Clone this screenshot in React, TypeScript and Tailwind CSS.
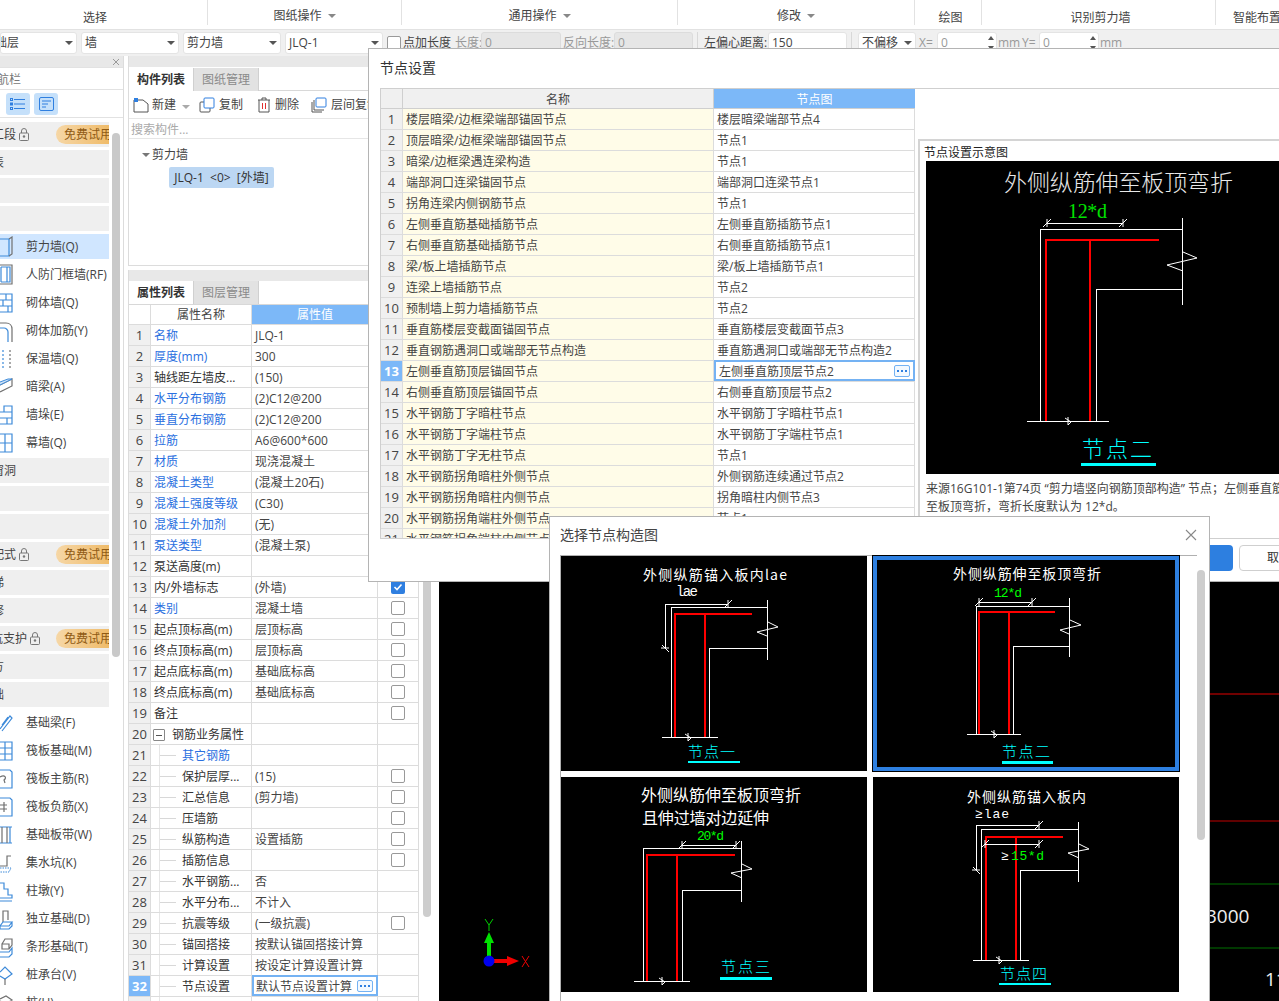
import { ReactNode } from "react";

const sans = "'Open Sans','Noto Sans CJK SC',sans-serif";
const cjk = "'Noto Sans CJK SC',sans-serif";
const mono = "'Liberation Mono',monospace";
const serif = "'Liberation Serif',serif";

const nodeRows = [
  ["楼层暗梁/边框梁端部锚固节点", "楼层暗梁端部节点4"],
  ["顶层暗梁/边框梁端部锚固节点", "节点1"],
  ["暗梁/边框梁遇连梁构造", "节点1"],
  ["端部洞口连梁锚固节点", "端部洞口连梁节点1"],
  ["拐角连梁内侧钢筋节点", "节点1"],
  ["左侧垂直筋基础插筋节点", "左侧垂直筋插筋节点1"],
  ["右侧垂直筋基础插筋节点", "右侧垂直筋插筋节点1"],
  ["梁/板上墙插筋节点", "梁/板上墙插筋节点1"],
  ["连梁上墙插筋节点", "节点2"],
  ["预制墙上剪力墙插筋节点", "节点2"],
  ["垂直筋楼层变截面锚固节点", "垂直筋楼层变截面节点3"],
  ["垂直钢筋遇洞口或端部无节点构造", "垂直筋遇洞口或端部无节点构造2"],
  ["左侧垂直筋顶层锚固节点", "左侧垂直筋顶层节点2"],
  ["右侧垂直筋顶层锚固节点", "右侧垂直筋顶层节点2"],
  ["水平钢筋丁字暗柱节点", "水平钢筋丁字暗柱节点1"],
  ["水平钢筋丁字端柱节点", "水平钢筋丁字端柱节点1"],
  ["水平钢筋丁字无柱节点", "节点1"],
  ["水平钢筋拐角暗柱外侧节点", "外侧钢筋连续通过节点2"],
  ["水平钢筋拐角暗柱内侧节点", "拐角暗柱内侧节点3"],
  ["水平钢筋拐角端柱外侧节点", "节点1"],
  ["水平钢筋拐角端柱内侧节点", "节点1"],
];

// check: 0 none, 1 empty box, 2 ticked
const propRows = [
  { n: "名称", v: "JLQ-1", blue: true, check: 0 },
  { n: "厚度(mm)", v: "300", blue: true, check: 0 },
  { n: "轴线距左墙皮...", v: "(150)", blue: false, check: 0 },
  { n: "水平分布钢筋", v: "(2)C12@200", blue: true, check: 0 },
  { n: "垂直分布钢筋", v: "(2)C12@200", blue: true, check: 0 },
  { n: "拉筋", v: "A6@600*600", blue: true, check: 0 },
  { n: "材质", v: "现浇混凝土", blue: true, check: 0 },
  { n: "混凝土类型", v: "(混凝土20石)", blue: true, check: 0 },
  { n: "混凝土强度等级", v: "(C30)", blue: true, check: 0 },
  { n: "混凝土外加剂", v: "(无)", blue: true, check: 0 },
  { n: "泵送类型", v: "(混凝土泵)", blue: true, check: 0 },
  { n: "泵送高度(m)", v: "", blue: false, check: 0 },
  { n: "内/外墙标志", v: "(外墙)", blue: false, check: 2 },
  { n: "类别", v: "混凝土墙", blue: true, check: 1 },
  { n: "起点顶标高(m)", v: "层顶标高", blue: false, check: 1 },
  { n: "终点顶标高(m)", v: "层顶标高", blue: false, check: 1 },
  { n: "起点底标高(m)", v: "基础底标高", blue: false, check: 1 },
  { n: "终点底标高(m)", v: "基础底标高", blue: false, check: 1 },
  { n: "备注", v: "", blue: false, check: 1 },
];

const subRows = [
  { n: "其它钢筋", v: "", blue: true, check: 0 },
  { n: "保护层厚...", v: "(15)", blue: false, check: 1 },
  { n: "汇总信息", v: "(剪力墙)", blue: false, check: 1 },
  { n: "压墙筋", v: "", blue: false, check: 1 },
  { n: "纵筋构造", v: "设置插筋", blue: false, check: 1 },
  { n: "插筋信息", v: "", blue: false, check: 1 },
  { n: "水平钢筋...", v: "否", blue: false, check: 0 },
  { n: "水平分布...", v: "不计入", blue: false, check: 0 },
  { n: "抗震等级", v: "(一级抗震)", blue: false, check: 1 },
  { n: "锚固搭接", v: "按默认锚固搭接计算", blue: false, check: 0 },
  { n: "计算设置", v: "按设定计算设置计算", blue: false, check: 0 },
];

const blueLine = { fill: "none", stroke: "#3d8ad9", strokeWidth: 1.2 };
const grayLine = { fill: "none", stroke: "#707070", strokeWidth: 1.2 };

const navIcons: Record<string, ReactNode> = {
  shear: <><path d="M0 3H9V20H0" {...blueLine} /><path d="M9 3L12 1V18L9 20" {...grayLine} /></>,
  door: <><path d="M0 1H12V20H0" {...grayLine} /><path d="M1 3V18M7 3V18M1 3H10V18H1" {...blueLine} /></>,
  brick: <path d="M0 2H12V20H0M0 8H12M0 14H12M6 2V8M3 8V14M8 14V20" {...blueLine} />,
  rebar: <><path d="M0 3H6C10 3 12 6 12 9V22" {...grayLine} /><path d="M0 8H4C6 8 8 10 8 12V22" {...blueLine} /></>,
  insul: <><path d="M3 2V20" fill="none" stroke="#3d8ad9" strokeWidth="1.2" strokeDasharray="2 2" /><path d="M10 2V20" fill="none" stroke="#707070" strokeWidth="1.2" strokeDasharray="2 2" /></>,
  beam: <><path d="M0 9L12 3V10L0 16" {...grayLine} /><path d="M0 6L8 3H12L0 9" fill="#cfe3f8" stroke="#3d8ad9" /></>,
  pier: <path d="M0 8H4V2H12V20H0M0 14H12M4 8H12M7 14V20" {...blueLine} />,
  curtain: <path d="M0 2H12V20H0M0 11H12M5 2V20" {...blueLine} />,
  ground: <path d="M0 17L10 4L12 6L2 19M2 13L8 5" {...blueLine} />,
  raft: <path d="M0 2H12V20H0M0 8H12M0 14H12M5 2V20" {...blueLine} />,
  raftMain: <><path d="M0 2H10L12 4V20H0" {...blueLine} /><path d="M0 9C5 6 7 10 4 12L5 15" {...grayLine} /></>,
  raftNeg: <><path d="M0 2H10L12 4V20H0" {...blueLine} /><path d="M0 9H7M0 13H7M4 6V16" {...grayLine} /></>,
  strip: <><path d="M0 3H12M0 19H12" {...blueLine} /><path d="M2 3V19M7 3V19" {...grayLine} /><path d="M10 3V19" {...blueLine} /></>,
  pit: <><path d="M0 14H7V4H11" {...grayLine} /><path d="M0 16H11L9 20H0" fill="none" stroke="#3d8ad9" strokeDasharray="1.5 1" /></>,
  column: <path d="M0 18H12V15H8V9H4V3H0M0 21H12" {...blueLine} />,
  footing: <><path d="M3 14V3H8V12" {...grayLine} /><path d="M0 18H9L12 14H3L0 18V21H9L12 18V14" {...blueLine} /></>,
  strip2: <><path d="M2 8L5 3H12V9L9 13H2V8H9V13" {...grayLine} /><path d="M0 16H9L12 12V18L9 21H0" {...blueLine} /></>,
  cap: <><path d="M0 8L5 3L12 10L5 15L0 12" {...blueLine} /><path d="M5 15V21" {...grayLine} /></>,
  pile: <path d="M0 7L6 4L12 8L6 12L0 9" {...grayLine} />,
};

function Lock() {
  return (
    <svg width="10" height="13" viewBox="0 0 10 13" className="shrink-0">
      <path d="M2.5 5V3a2.5 2.5 0 0 1 5 0v2" fill="none" stroke="#777" />
      <rect x="0.5" y="5" width="9" height="7.5" rx="1" fill="none" stroke="#777" />
      <circle cx="5" cy="8.5" r="1.2" fill="#777" />
    </svg>
  );
}

function GrayRow({ text, shift, lock, pill }: { text?: string; shift?: string; lock?: boolean; pill?: boolean }) {
  return (
    <div className="relative h-[25px] flex items-center bg-[#efefef] overflow-hidden text-[#444] shrink-0">
      {text && <span className={`${shift} whitespace-nowrap`}>{text}</span>}
      {lock && <span className="ml-[3px]"><Lock /></span>}
      {pill && (
        <span className="absolute left-[56px] top-[3px] w-[53px] h-[19px] rounded-l-full bg-gradient-to-r from-[#f6d7a6] to-[#efbb69] text-[#8f5a14] flex items-center pl-[8px] whitespace-nowrap">
          免费试用
        </span>
      )}
    </div>
  );
}

function NavItem({ icon, text, active }: { icon: string; text: string; active?: boolean }) {
  return (
    <div className={`h-[25px] flex items-center shrink-0 text-[#444] whitespace-nowrap ${active ? "bg-[#d0e6ff]" : ""}`}>
      <svg width="14" height="22" viewBox="0 0 14 22" className="shrink-0 mr-[12px]">{navIcons[icon]}</svg>
      {text}
    </div>
  );
}

function Caret({ color = "#666" }: { color?: string }) {
  return <span className="inline-block w-0 h-0 border-l-[4px] border-r-[4px] border-t-[4px] border-l-transparent border-r-transparent" style={{ borderTopColor: color }} />;
}

function Sel({ w, children, shift }: { w: string; children: ReactNode; shift?: string }) {
  return (
    <div className={`${w} h-[22px] shrink-0 bg-white border border-[#e4e4e4] rounded-[3px] flex items-center justify-between pl-[3px] pr-[3px] overflow-hidden`}>
      <span className={`${shift ?? ""} whitespace-nowrap`}>{children}</span>
      <Caret color="#555" />
    </div>
  );
}

function Spin({ w }: { w: string }) {
  return (
    <div className={`${w} h-[22px] shrink-0 bg-white border border-[#e4e4e4] rounded-[3px] flex items-center justify-between pl-[3px] pr-[2px] text-[#999]`}>
      0
      <span className="flex flex-col gap-[6px]">
        <span className="w-0 h-0 border-l-[3px] border-r-[3px] border-b-[4px] border-l-transparent border-r-transparent border-b-[#555]" />
        <span className="w-0 h-0 border-l-[3px] border-r-[3px] border-t-[4px] border-l-transparent border-r-transparent border-t-[#555]" />
      </span>
    </div>
  );
}

function Dots() {
  return (
    <span className="w-[16px] h-[12px] shrink-0 border border-[#74b2f3] rounded-[2px] bg-[#f3f9ff] flex items-center justify-center gap-[2px]">
      <i className="w-[2px] h-[2px] bg-[#2f7fe0]" />
      <i className="w-[2px] h-[2px] bg-[#2f7fe0]" />
      <i className="w-[2px] h-[2px] bg-[#2f7fe0]" />
    </span>
  );
}

function Check({ on }: { on?: boolean }) {
  if (on) {
    return (
      <span className="w-[14px] h-[14px] rounded-[2px] bg-[#2f7fe0] flex items-center justify-center">
        <svg width="10" height="10" viewBox="0 0 10 10"><path d="M1.5 5L4 7.5L8.5 2.5" fill="none" stroke="#fff" strokeWidth="1.6" /></svg>
      </span>
    );
  }
  return <span className="w-[14px] h-[14px] rounded-[2px] border border-[#999] bg-white" />;
}

function Tab({ label, active }: { label: string; active?: boolean }) {
  return (
    <div className={`h-[23px] w-[65px] flex items-center justify-center border-r border-[#d0d0d0] ${active ? "bg-white font-bold text-[#333]" : "bg-[#e2e2e2] text-[#8a8a8a]"}`}>
      {label}
    </div>
  );
}

function PropRow({ i, name, value, blue, check, sub, active }: { i: number; name: ReactNode; value: string; blue?: boolean; check: number; sub?: boolean; active?: boolean }) {
  return (
    <div className="h-[21px] flex border-b border-[#dcdcdc] shrink-0">
      <div className={`w-[22px] shrink-0 flex items-center justify-center pt-[2px] border-r border-[#dcdcdc] text-[13px] ${active ? "bg-[#7cb8f8] text-white font-bold" : "bg-[#f0f0f0] text-[#444]"}`}>{i}</div>
      <div className={`w-[101px] shrink-0 flex items-center border-r border-[#dcdcdc] whitespace-nowrap ${blue ? "text-[#2a6fe0]" : "text-[#333]"}`}>
        {sub && <span className="w-[9px] h-full border-r border-[#e6e6e6] shrink-0" />}
        {sub && <span className="w-[16px] h-px bg-[#d8d8d8] shrink-0 mr-[6px]" />}
        {!sub && <span className="pl-[3px]" />}
        <span className="flex items-center pt-[2px]">{name}</span>
      </div>
      {active ? (
        <div className="w-[126px] shrink-0 flex items-center justify-between border-2 border-[#74b2f3] -mt-px pl-[2px] pr-[3px] text-[#444] whitespace-nowrap">
          <span className="pt-[2px]">{value}</span>
          <Dots />
        </div>
      ) : (
        <div className="w-[126px] shrink-0 flex items-center border-r border-[#dcdcdc] pl-[3px] pt-[2px] text-[#444] whitespace-nowrap">{value}</div>
      )}
      <div className="flex-1 flex items-center justify-center border-r border-[#dcdcdc]">{check > 0 && <Check on={check === 2} />}</div>
    </div>
  );
}

type Geo = { l: number; r: number; t: number; ih: number; iv: number; b: number; bl: number; br: number; rt: number; rb: number; r1: number; r2: number; ry: number; re: number; bx: number; zig: string };

function Wall({ g }: { g: Geo }) {
  return (
    <g>
      <g stroke="#fff" strokeWidth="1" fill="none" shapeRendering="crispEdges">
        <path d={`M${g.l} ${g.b}V${g.t}H${g.r}`} />
        <path d={`M${g.r} ${g.rt}V${g.rb}`} />
        <path d={`M${g.iv} ${g.b}V${g.ih}H${g.r}`} />
        <path d={`M${g.bl} ${g.b}H${g.br}`} />
      </g>
      <polyline points={g.zig} fill="none" stroke="#fff" strokeWidth="1" />
      <path d={`M${g.bx - 3} ${g.b - 3}L${g.bx + 3} ${g.b + 1}L${g.bx} ${g.b + 4}V${g.b - 4}`} fill="none" stroke="#fff" strokeWidth="1" />
      <g stroke="#ff0000" strokeWidth="2" fill="none" shapeRendering="crispEdges">
        <path d={`M${g.r1} ${g.b}V${g.ry}H${g.re}`} />
        <path d={`M${g.r2} ${g.b}V${g.ry}`} />
      </g>
    </g>
  );
}

function Dim({ x1, x2, y, down }: { x1: number; x2: number; y: number; down?: number }) {
  return (
    <g stroke="#fff" strokeWidth="1" fill="none">
      {down ? <path d={`M${x2} ${y}H${x1}V${down}`} shapeRendering="crispEdges" /> : <path d={`M${x1} ${y}H${x2}`} shapeRendering="crispEdges" />}
      <path d={`M${x2} ${y - 4}V${y + 4}M${x2 - 4} ${y + 4}L${x2 + 4} ${y - 4}`} />
      {down ? (
        <path d={`M${x1 - 4} ${down}H${x1 + 4}M${x1 - 3} ${down - 3}L${x1 + 4} ${down + 4}`} />
      ) : (
        <path d={`M${x1} ${y - 4}V${y + 4}M${x1 - 4} ${y + 4}L${x1 + 4} ${y - 4}`} />
      )}
    </g>
  );
}

// family === cjk sits a bit low with central baseline, so nudge it up
function T({ x, y, w, size, fill = "#fff", family = cjk, weight, children }: { x: number; y: number; w: number; size: number; fill?: string; family?: string; weight?: number; children: string }) {
  return (
    <text x={x} y={family === cjk ? y - size * 0.1 : y} textLength={w} lengthAdjust="spacing" fontSize={size} fill={fill} fontFamily={family} fontWeight={weight} dominantBaseline="central">
      {children}
    </text>
  );
}

function Label({ x, y, w, size, ux, uw, uy, uh, children }: { x: number; y: number; w: number; size: number; ux: number; uw: number; uy: number; uh: number; children: string }) {
  return (
    <g>
      <T x={x} y={y} w={w} size={size} fill="#00ffff" weight={300}>{children}</T>
      <rect x={ux} y={uy} width={uw} height={uh} fill="#00ffff" />
    </g>
  );
}

function Card({ x, y, selected, children }: { x: number; y: number; selected?: boolean; children: ReactNode }) {
  return (
    <div className={`h-[215px] bg-black ${selected ? "border-[4px] border-[#2d7fe0] outline outline-1 outline-black" : ""}`}>
      <svg width="306" height="215" viewBox={`${x} ${y} 306 215`} className={`block ${selected ? "-mt-[4px] -ml-[4px]" : ""}`}>
        {children}
      </svg>
    </div>
  );
}

export default function App() {
  return (
    <div className="relative w-[1279px] h-[1001px] overflow-hidden bg-white text-[12px] text-[#444] font-['Open_Sans','Noto_Sans_CJK_SC',sans-serif]">
      {/* ribbon labels */}
      <div className="h-[30px] flex border-b border-[#e2e2e2] bg-white overflow-hidden">
        <div className="w-[208px] h-[25px] shrink-0 flex items-center justify-center pt-[11px] border-r border-[#e2e2e2]"><span className="mr-[17px]">选择</span></div>
        <div className="w-[194px] h-[25px] shrink-0 flex items-center justify-center gap-[6px] pt-[6px] border-r border-[#e2e2e2]">图纸操作 <Caret color="#888" /></div>
        <div className="w-[276px] h-[25px] shrink-0 flex items-center justify-center gap-[6px] pt-[6px] border-r border-[#e2e2e2]">通用操作 <Caret color="#888" /></div>
        <div className="w-[237px] h-[25px] shrink-0 flex items-center justify-center gap-[6px] pt-[6px] border-r border-[#e2e2e2]">修改 <Caret color="#888" /></div>
        <div className="w-[67px] h-[25px] shrink-0 flex items-center justify-center pt-[11px] pl-[5px] border-r border-[#e2e2e2]">绘图</div>
        <div className="w-[234px] h-[25px] shrink-0 flex items-center justify-center pt-[11px] pl-[4px] border-r border-[#e2e2e2]">识别剪力墙</div>
        <div className="h-[25px] shrink-0 flex items-center pl-[17px] pt-[11px] whitespace-nowrap">智能布置</div>
      </div>

      {/* option bar */}
      <div className="h-[26px] flex items-center bg-[#f0f0f0] overflow-hidden whitespace-nowrap">
        <Sel w="w-[77px]" shift="-ml-[21px]">基础层</Sel>
        <span className="w-[4px] shrink-0" />
        <Sel w="w-[98px]">墙</Sel>
        <span className="w-[4px] shrink-0" />
        <Sel w="w-[98px]">剪力墙</Sel>
        <span className="w-[4px] shrink-0" />
        <Sel w="w-[98px]">JLQ-1</Sel>
        <span className="w-[4px] shrink-0" />
        <span className="w-[14px] h-[14px] shrink-0 border border-[#999] rounded-[2px] bg-white" />
        <span className="w-[50px] pl-[2px] shrink-0">点加长度</span>
        <span className="w-[30px] pl-[4px] shrink-0 text-[#999]">长度:</span>
        <span className="w-[80px] h-[22px] shrink-0 bg-[#e6e6e6] border border-[#dcdcdc] rounded-[3px] pl-[3px] text-[#999] flex items-center">0</span>
        <span className="w-[53px] pl-[2px] shrink-0 text-[#999]">反向长度:</span>
        <span className="w-[79px] h-[22px] shrink-0 bg-[#e6e6e6] border border-[#dcdcdc] rounded-[3px] pl-[3px] text-[#999] flex items-center">0</span>
        <span className="ml-[4px] w-px h-[22px] bg-[#d8d8d8] shrink-0" />
        <span className="w-[70px] pl-[6px] shrink-0">左偏心距离:</span>
        <span className="w-[79px] h-[22px] shrink-0 bg-white border border-[#e4e4e4] rounded-[3px] pl-[3px] flex items-center">150</span>
        <span className="ml-[4px] w-px h-[22px] bg-[#d8d8d8] shrink-0" />
        <span className="w-[6px] shrink-0" />
        <Sel w="w-[58px]">不偏移</Sel>
        <span className="w-[21px] pl-[3px] shrink-0 text-[#999]">X=</span>
        <Spin w="w-[60px]" />
        <span className="w-[25px] pl-[1px] shrink-0 text-[#999]">mm</span>
        <span className="w-[17px] shrink-0 text-[#999]">Y=</span>
        <Spin w="w-[60px]" />
        <span className="pl-[1px] shrink-0 text-[#999]">mm</span>
      </div>

      <div className="flex h-[945px]">
        {/* navigation */}
        <div className="w-[124px] shrink-0 border-r border-[#dcdcdc] flex flex-col overflow-hidden">
          <div className="h-[11px] bg-[#e8e8e8] flex items-center justify-end pr-[3px] shrink-0">
            <svg width="8" height="8" viewBox="0 0 8 8"><path d="M1 1L7 7M7 1L1 7" stroke="#999" /></svg>
          </div>
          <div className="h-[23px] border-t border-b border-[#e2e2e2] flex items-center pt-[2px] shrink-0 text-[#777]"><span className="-ml-[15px] whitespace-nowrap">导航栏</span></div>
          <div className="h-[28px] border-b border-[#e2e2e2] flex items-center gap-[4px] pl-[6px] shrink-0">
            <span className="w-[24px] h-[22px] rounded-[3px] bg-[#c5e0fa] flex items-center justify-center">
              <svg width="16" height="12" viewBox="0 0 16 12"><path d="M4 1.5H15M4 6H15M4 10.5H15" stroke="#2f7fe0" /><rect x="0.5" y="0.5" width="2" height="2" fill="none" stroke="#2f7fe0" /><rect x="0.5" y="5" width="2" height="2" fill="none" stroke="#2f7fe0" /><rect x="0.5" y="9.5" width="2" height="2" fill="none" stroke="#2f7fe0" /></svg>
            </span>
            <span className="w-[24px] h-[22px] rounded-[3px] bg-[#c5e0fa] flex items-center justify-center">
              <svg width="15" height="14" viewBox="0 0 15 14"><rect x="0.5" y="0.5" width="14" height="13" rx="1.5" fill="none" stroke="#2f7fe0" /><path d="M3 4H12M3 7H9M3 10H7" stroke="#2f7fe0" /></svg>
            </span>
          </div>
          <div className="flex pt-[4px] flex-1 overflow-hidden">
            <div className="w-[109px] shrink-0 flex flex-col gap-[3px]">
              <GrayRow text="施工段" shift="-ml-[20px]" lock pill />
              <GrayRow text="报表" shift="-ml-[20px]" />
              <GrayRow />
              <GrayRow />
              <NavItem icon="shear" text="剪力墙(Q)" active />
              <NavItem icon="door" text="人防门框墙(RF)" />
              <NavItem icon="brick" text="砌体墙(Q)" />
              <NavItem icon="rebar" text="砌体加筋(Y)" />
              <NavItem icon="insul" text="保温墙(Q)" />
              <NavItem icon="beam" text="暗梁(A)" />
              <NavItem icon="pier" text="墙垛(E)" />
              <NavItem icon="curtain" text="幕墙(Q)" />
              <GrayRow text="门窗洞" shift="-ml-[20px]" />
              <GrayRow />
              <GrayRow />
              <GrayRow text="装配式" shift="-ml-[20px]" lock pill />
              <GrayRow text="楼梯" shift="-ml-[20px]" />
              <GrayRow text="装修" shift="-ml-[20px]" />
              <GrayRow text="基坑支护" shift="-ml-[21px]" lock pill />
              <GrayRow text="土方" shift="-ml-[20px]" />
              <GrayRow text="基础" shift="-ml-[20px]" />
              <NavItem icon="ground" text="基础梁(F)" />
              <NavItem icon="raft" text="筏板基础(M)" />
              <NavItem icon="raftMain" text="筏板主筋(R)" />
              <NavItem icon="raftNeg" text="筏板负筋(X)" />
              <NavItem icon="strip" text="基础板带(W)" />
              <NavItem icon="pit" text="集水坑(K)" />
              <NavItem icon="column" text="柱墩(Y)" />
              <NavItem icon="footing" text="独立基础(D)" />
              <NavItem icon="strip2" text="条形基础(T)" />
              <NavItem icon="cap" text="桩承台(V)" />
              <NavItem icon="pile" text="桩(U)" />
            </div>
            <div className="ml-[3px] mt-[11px] w-[8px] h-[524px] rounded-full bg-[#c9c9c9]" />
          </div>
        </div>

        {/* component + property panels */}
        <div className="w-[303px] ml-[4px] shrink-0 flex flex-col">
          <div className="h-[210px] shrink-0 border border-t-0 border-[#dcdcdc] flex flex-col">
            <div className="h-[11px] bg-[#e8e8e8] shrink-0" />
            <div className="h-[24px] pt-px flex border-b border-[#d8d8d8] shrink-0">
              <Tab label="构件列表" active />
              <Tab label="图纸管理" />
            </div>
            <div className="h-[28px] flex items-center shrink-0 whitespace-nowrap border-b border-[#e6e6e6]">
              <svg width="16" height="16" viewBox="0 0 16 16" className="ml-[4px] mr-[3px]"><path d="M1 15V3H10L15 7V15Z" fill="none" stroke="#555" /><rect x="1" y="1" width="4" height="4" fill="#2f7fe0" /></svg>
              新建
              <span className="ml-[6px] mr-[9px]"><Caret color="#aaa" /></span>
              <svg width="16" height="16" viewBox="0 0 16 16" className="mr-[4px]"><rect x="1" y="5" width="10" height="10" rx="1" fill="none" stroke="#555" /><rect x="5" y="1" width="10" height="10" rx="1" fill="#fff" stroke="#2f7fe0" /></svg>
              复制
              <svg width="14" height="16" viewBox="0 0 14 16" className="ml-[14px] mr-[4px]"><path d="M1 3H13M5 3V1H9V3M2 3V15H12V3" fill="none" stroke="#555" /><path d="M5.5 6V12M8.5 6V12" stroke="#e03030" /></svg>
              删除
              <svg width="16" height="16" viewBox="0 0 16 16" className="ml-[12px] mr-[4px]"><path d="M1 5V15H11M3 3V13H13" fill="none" stroke="#555" /><rect x="5" y="1" width="10" height="9" rx="1" fill="#fff" stroke="#2f7fe0" /></svg>
              层间复制
            </div>
            <div className="h-[20px] flex items-center pl-[2px] pt-[2px] text-[#aaa] border-b border-[#e6e6e6] shrink-0">搜索构件...</div>
            <div className="flex items-center h-[28px] pl-[13px] pt-[3px] gap-[2px] shrink-0">
              <Caret color="#777" />
              <span>剪力墙</span>
            </div>
            <div className="ml-[40px] w-[105px] h-[21px] rounded-[2px] bg-[#bcd7f3] flex items-center justify-center whitespace-nowrap text-[#333]">JLQ-1&nbsp;&nbsp;&lt;0&gt;&nbsp;&nbsp;[外墙]</div>
          </div>

          <div className="mt-[4px] flex flex-1 overflow-hidden">
            <div className="w-[291px] shrink-0 flex flex-col border-l border-[#dcdcdc]">
              <div className="h-[11px] bg-[#e8e8e8] shrink-0" />
              <div className="h-[24px] flex border-b border-[#d8d8d8] shrink-0">
                <Tab label="属性列表" active />
                <Tab label="图层管理" />
              </div>
              <div className="h-[20px] flex border-b border-[#dcdcdc] shrink-0">
                <div className="w-[22px] border-r border-[#dcdcdc]" />
                <div className="w-[101px] flex items-center justify-center border-r border-[#dcdcdc]">属性名称</div>
                <div className="w-[126px] flex items-center justify-center bg-[#7cb8f8] text-white">属性值</div>
              </div>
              {propRows.map((r, i) => (
                <PropRow key={i} i={i + 1} name={r.n} value={r.v} blue={r.blue} check={r.check} />
              ))}
              <PropRow
                i={20}
                name={
                  <>
                    <span className="-ml-px w-[12px] h-[12px] shrink-0 border border-[#888] rounded-[1px] flex items-center justify-center mr-[7px]"><i className="w-[6px] h-px bg-[#555]" /></span>
                    钢筋业务属性
                  </>
                }
                value=""
                check={0}
              />
              {subRows.map((r, i) => (
                <PropRow key={i} i={i + 21} name={r.n} value={r.v} blue={r.blue} check={r.check} sub />
              ))}
              <PropRow i={32} name="节点设置" value="默认节点设置计算" check={0} sub active />
              <PropRow i={33} name="" value="" check={0} sub />
            </div>
            <div className="ml-[4px] mt-[35px] w-[8px] h-[612px] rounded-b-full bg-[#cdcdcd]" />
          </div>
        </div>

        {/* drawing canvas */}
        <div className="ml-[8px] flex-1 bg-black overflow-hidden">
          <svg width="840" height="945" viewBox="439 56 840 945" className="block">
            <path d="M1209 694H1279" stroke="#e00000" />
            <path d="M1209 821H1279" stroke="#c00000" />
            <path d="M1209 884H1279M1209 948H1279" stroke="#007000" />
            <text x="1206" y="923" fontSize="19" fill="#eee" fontFamily={sans}>3000</text>
            <text x="1265" y="986" fontSize="19" fill="#eee" fontFamily={sans}>11</text>
            <path d="M489 958V939" stroke="#00e000" strokeWidth="4" />
            <path d="M484 943L489 932L494 943Z" fill="#00e000" />
            <path d="M485 919L489 925L493 919M489 925V931" fill="none" stroke="#00d000" />
            <path d="M494 961H510" stroke="#f00000" strokeWidth="4" />
            <path d="M507 956L519 961L507 966Z" fill="#f00000" />
            <path d="M522 956L529 967M529 956L522 967" stroke="#f00000" />
            <circle cx="489" cy="961" r="5.5" fill="#0000f0" />
          </svg>
        </div>
      </div>

      {/* node settings dialog */}
      <div className="absolute left-[368px] top-[48px] w-[930px] h-[534px] bg-white border border-[#b4b4b4]">
        <div className="h-[39px] pl-[11px] pb-[2px] flex items-center text-[14px] text-[#333]">节点设置</div>
        <div className="h-[451px] ml-[11px] border-t border-b border-[#cfcfcf] flex overflow-hidden">
          <div className="w-[535px] shrink-0 border-l border-[#cfcfcf]">
            <div className="h-[20px] flex border-b border-[#cfcfcf]">
              <div className="w-[22px] shrink-0 bg-[#f0f0f0] border-r border-[#cfcfcf]" />
              <div className="w-[311px] shrink-0 bg-[#f0f0f0] flex items-center justify-center pt-[3px] border-r border-[#cfcfcf]">名称</div>
              <div className="w-[201px] shrink-0 bg-[#7cb8f8] text-white flex items-center justify-center pt-[3px]">节点图</div>
            </div>
            {nodeRows.map((r, i) => (
              <div key={i} className="h-[21px] flex border-b border-[#dcdcdc]">
                <div className={`w-[22px] shrink-0 flex items-center justify-center pt-[2px] border-r border-[#dcdcdc] text-[13px] ${i === 12 ? "bg-[#7cb8f8] text-white font-bold" : "bg-[#f0f0f0]"}`}>{i + 1}</div>
                <div className="w-[311px] shrink-0 bg-[#fffce8] flex items-center pl-[3px] pt-[2px] border-r border-[#dcdcdc] whitespace-nowrap">{r[0]}</div>
                {i === 12 ? (
                  <div className="w-[201px] shrink-0 border-2 border-[#74b2f3] -mt-px flex items-center justify-between pl-[3px] pr-[3px] whitespace-nowrap">
                    <span className="pt-[2px]">{r[1]}</span>
                    <Dots />
                  </div>
                ) : (
                  <div className="w-[201px] shrink-0 flex items-center pl-[3px] pt-[2px] border-r border-[#dcdcdc] whitespace-nowrap">{r[1]}</div>
                )}
              </div>
            ))}
          </div>
          <div className="flex-1 pl-[3px] pt-[50px]">
            <div className="h-full border-t-2 border-l-2 border-[#d4d4d4] pl-[6px]">
              <div className="-ml-[2px] h-[20px] flex items-center pt-[3px] text-[#222]">节点设置示意图</div>
              <div className="h-[313px] bg-black">
                <svg width="420" height="313" viewBox="926 161 420 313" className="block">
                  <Wall g={{ l: 1040, r: 1182, t: 229, ih: 289, iv: 1096, b: 421, bl: 1027, br: 1109, rt: 218, rb: 305, r1: 1046, r2: 1090, ry: 240, re: 1159, bx: 1068, zig: "1183,252 1197,258 1167,265 1183,271" }} />
                  <Dim x1={1047} x2={1123} y={223} />
                  <T x={1004} y={183} w={229} size={23} weight={300} fill="#e8e8e8">外侧纵筋伸至板顶弯折</T>
                  <T x={1068} y={211} w={39} size={20} fill="#00e000" family={serif}>12*d</T>
                  <Label x={1082} y={449} w={70} size={22} ux={1081} uw={75} uy={463} uh={3}>节点二</Label>
                </svg>
              </div>
              <div className="pt-[6px] leading-[17px] text-[#444] whitespace-nowrap">
                <div>来源16G101-1第74页 “剪力墙竖向钢筋顶部构造” 节点；左侧垂直筋伸</div>
                <div className="pt-px">至板顶弯折，弯折长度默认为 12*d。</div>
              </div>
            </div>
          </div>
        </div>
        <div className="flex justify-end gap-[6px] pt-[6px] w-[886px]">
          <div className="w-[120px] h-[26px] shrink-0 rounded-[4px] bg-[#2d7fe0] text-white flex items-center justify-center">确定</div>
          <div className="w-[60px] -mr-[44px] h-[26px] shrink-0 rounded-[4px] border border-[#cfcfcf] text-[#333] flex items-center pl-[27px] whitespace-nowrap">取消</div>
        </div>
      </div>

      {/* node picker dialog */}
      <div className="absolute left-[549px] top-[516px] w-[661px] h-[500px] bg-white border border-[#b4b4b4]">
        <div className="h-[38px] pl-[10px] pr-[12px] pb-[3px] flex items-center justify-between text-[14px] text-[#444]">
          选择节点构造图
          <svg width="12" height="12" viewBox="0 0 12 12"><path d="M1 1L11 11M11 1L1 11" stroke="#888" strokeWidth="1.1" /></svg>
        </div>
        <div className="flex">
          <div className="ml-[10px] w-[637px] h-[450px] shrink-0 border-t border-l border-[#b0b0b0] grid grid-cols-[306px_306px] grid-rows-[215px_216px] gap-x-[6px] gap-y-[6px] content-start">
            <Card x={561} y={556}>
              <Wall g={{ l: 671, r: 767, t: 607, ih: 648, iv: 709, b: 737, bl: 662, br: 718, rt: 600, rb: 660, r1: 675, r2: 705, ry: 614, re: 752, bx: 688, zig: "768,622 778,627 757,632 767,636" }} />
              <Dim x1={665} x2={728} y={604} down={648} />
              <T x={643} y={575} w={144} size={14}>外侧纵筋锚入板内lae</T>
              <T x={676} y={592} w={22} size={14} family={mono}>lae</T>
              <Label x={688} y={752} w={47} size={15} ux={688} uw={52} uy={761} uh={2}>节点一</Label>
            </Card>
            <Card x={873} y={556} selected>
              <Wall g={{ l: 976, r: 1069, t: 606, ih: 646, iv: 1013, b: 734, bl: 967, br: 1021, rt: 598, rb: 657, r1: 979, r2: 1009, ry: 612, re: 1055, bx: 994, zig: "1070,620 1081,625 1060,630 1069,634" }} />
              <Dim x1={979} x2={1032} y={602} />
              <T x={953} y={574} w={148} size={14}>外侧纵筋伸至板顶弯折</T>
              <T x={994} y={593} w={28} size={13} fill="#00ff00" family={mono}>12*d</T>
              <Label x={1002} y={752} w={48} size={15} ux={1002} uw={51} uy={761} uh={3}>节点二</Label>
            </Card>
            <Card x={561} y={777}>
              <Wall g={{ l: 643, r: 741, t: 848, ih: 890, iv: 682, b: 981, bl: 634, br: 690, rt: 841, rb: 902, r1: 647, r2: 677, ry: 855, re: 735, bx: 662, zig: "742,864 752,869 731,873 742,878" }} />
              <Dim x1={682} x2={736} y={845} />
              <T x={641} y={796} w={160} size={16}>外侧纵筋伸至板顶弯折</T>
              <T x={642} y={819} w={127} size={16}>且伸过墙对边延伸</T>
              <T x={697} y={836} w={27} size={13} fill="#00ff00" family={mono}>20*d</T>
              <Label x={721} y={967} w={49} size={15} ux={720} uw={52} uy={977} uh={3}>节点三</Label>
            </Card>
            <Card x={873} y={777}>
              <Wall g={{ l: 981, r: 1078, t: 829, ih: 870, iv: 1020, b: 960, bl: 973, br: 1029, rt: 822, rb: 882, r1: 986, r2: 1016, ry: 837, re: 1063, bx: 999, zig: "1079,844 1089,849 1068,853 1079,858" }} />
              <Dim x1={976} x2={1039} y={825} down={870} />
              <Dim x1={985} x2={1039} y={844} />
              <T x={967} y={797} w={119} size={14}>外侧纵筋锚入板内</T>
              <T x={975} y={814} w={34} size={13} family={mono}>≥lae</T>
              <T x={1001} y={856} w={10} size={13} family={mono}>≥</T>
              <T x={1011} y={856} w={33} size={13} fill="#00ff00" family={mono}>15*d</T>
              <Label x={1000} y={974} w={47} size={15} ux={999} uw={52} uy={983} uh={2}>节点四</Label>
            </Card>
          </div>
          <div className="mt-[15px] w-[8px] h-[270px] rounded-full bg-[#cdcdcd]" />
        </div>
      </div>
    </div>
  );
}
